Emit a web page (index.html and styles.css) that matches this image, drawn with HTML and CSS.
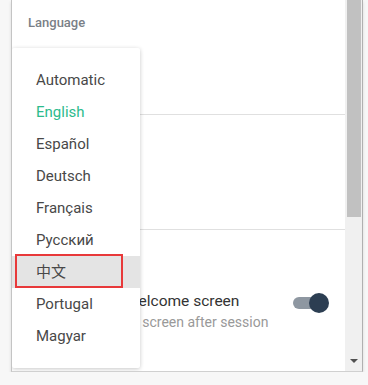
FILE: index.html
```html
<!DOCTYPE html>
<html lang="en">
<head>
  <meta charset="UTF-8">
  <meta name="viewport" content="width=device-width, initial-scale=1.0">
  <title>Settings</title>
  <link rel="stylesheet" href="styles.css">
</head>
<body>
  <!-- Settings panel, scrolled a little -->
  <div class="panel">
    <div class="content">
      <section class="section first">
        <h3 class="section-title">Language</h3>
        <div class="select">English</div>
      </section>

      <section class="section">
        <h3 class="section-title">Theme</h3>
        <div class="select">Light</div>
      </section>

      <section class="section">
        <h3 class="section-title">Startup</h3>
        <div class="row">
          <div class="row-text">
            <div class="row-label">Always load a welcome screen</div>
            <div class="row-hint">Opens a welcome screen after session</div>
          </div>
          <div class="toggle on"><span class="knob"></span></div>
        </div>
      </section>

      <!-- Open language dropdown -->
      <ul class="menu">
        <li>Automatic</li>
        <li class="selected">English</li>
        <li>Español</li>
        <li>Deutsch</li>
        <li>Français</li>
        <li>Русский</li>
        <li class="hover">中文</li>
        <li>Portugal</li>
        <li>Magyar</li>
      </ul>
      <div class="mark"></div>
    </div>

    <div class="scrollbar">
      <div class="thumb"></div>
      <div class="arrow"></div>
    </div>
  </div>
</body>
</html>
```

FILE: styles.css
```css
/* Page */
body {
    margin: 0;
    background-color: #f7f7f7;
    font-family: Roboto, "Noto Sans CJK SC", sans-serif;
}

/* Settings panel */
.panel {
    display: flex;
    width: 350px;
    height: 371px;
    margin-left: 11px;
    background-color: #fff;
    border-left: 1px solid #c4c4c4;
    border-right: 1px solid #b0b0b0;
    border-bottom: 1px solid #d0d0d0;
    box-shadow: 0 2px 3px rgba(0, 0, 0, 0.12);
}

.content {
    flex: 1;
    position: relative;
    overflow: hidden;
}

.section {
    height: 115px;
    border-bottom: 1px solid #e0e0e0;
    padding: 0 16px;
    box-sizing: border-box;
}

.section.first {
    padding-top: 15px;
}

.section:not(.first) {
    padding-top: 30px;
}

.section:last-of-type {
    border-bottom: none;
}

.section-title {
    margin: 0 0 18px;
    font-size: 13px;
    font-weight: 500;
    color: #7a7f87;
}

.select {
    font-size: 15px;
    color: #444;
}

/* Toggle row */
.row {
    display: flex;
    align-items: flex-start;
    justify-content: space-between;
    margin-top: -2px;
}

.row-label {
    height: 20px;
    line-height: 20px;
    font-size: 15.5px;
    color: #333;
}

.row-hint {
    margin-top: 3px;
    font-size: 14px;
    color: #999;
}

.toggle {
    position: relative;
    width: 30px;
    height: 12px;
    margin: 6px 6px 0 0;
    border-radius: 6px;
    background-color: #8e97a1;
}

.knob {
    position: absolute;
    top: -4px;
    right: -6px;
    width: 20px;
    height: 20px;
    border-radius: 50%;
    background-color: #2c3e52;
}

/* Dropdown menu */
.menu {
    position: absolute;
    top: 48px;
    left: 0;
    width: 128px;
    margin: 0;
    padding: 16px 0;
    list-style: none;
    background-color: #fff;
    border-radius: 2px;
    box-shadow: 0 1px 4px rgba(0, 0, 0, 0.22);
}

.menu li {
    height: 32px;
    line-height: 32px;
    padding-left: 24px;
    font-size: 15px;
    color: #484848;
}

.menu li.selected {
    color: #2cbb8c;
}

.menu li.hover {
    background-color: #e4e4e4;
}

/* Red highlight box */
.mark {
    position: absolute;
    top: 254px;
    left: 3px;
    width: 104px;
    height: 30px;
    border: 2px solid #e8393a;
}

/* Scrollbar */
.scrollbar {
    position: relative;
    width: 17px;
    background-color: #f0f0f0;
}

.thumb {
    height: 217px;
    margin: 0 1px 0 2px;
    background-color: #c1c1c1;
}

.arrow {
    position: absolute;
    bottom: 8px;
    left: 5px;
    border-left: 4px solid transparent;
    border-right: 4px solid transparent;
    border-top: 4px solid #505050;
}
```
